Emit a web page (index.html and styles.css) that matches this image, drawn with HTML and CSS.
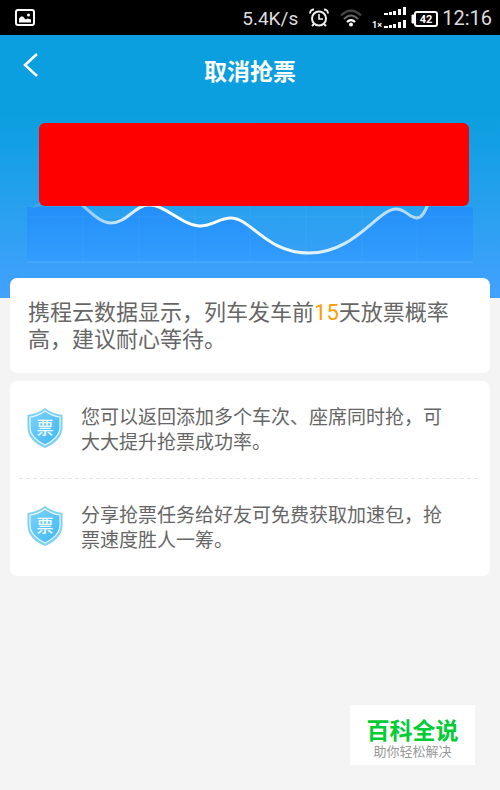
FILE: index.html
```html
<!DOCTYPE html>
<html lang="zh-CN">
<head>
<meta charset="utf-8">
<meta name="viewport" content="width=device-width, initial-scale=1">
<title>取消抢票</title>
<link rel="stylesheet" href="styles.css">
</head>
<body>
<div class="status">
  <svg class="status-photo" width="20" height="18" viewBox="0 0 20 18" aria-hidden="true">
    <rect x="1" y="1" width="18" height="15" rx="2" fill="none" stroke="#fff" stroke-width="2"/>
    <path d="M4 13.500V9.500l2-2h2l2.500 3 2-1 3.500 1v3z" fill="#fff"/>
    <circle cx="13.500" cy="6" r="1.500" fill="#fff"/>
  </svg>
  <span class="speed">5.4K/s</span>
  <svg width="20" height="20" viewBox="0 0 20 20" fill="none" stroke="#eee" aria-hidden="true">
    <circle cx="10" cy="10.500" r="7" stroke-width="2"/>
    <path d="M10 6v5h4" stroke-width="1.600"/>
    <path d="M1 5.500C1 3 3 1.500 5 1.500M19 5.500C19 3 17 1.500 15 1.500M5 16l-2 2M15 16l2 2" stroke-width="2"/>
  </svg>
  <svg class="wifi" width="22" height="18" viewBox="0 0 22 18" fill="none" stroke-width="2.200" aria-hidden="true">
    <path d="M1 6.500Q11-3 21 6.500" stroke="#444"/>
    <path d="M4 10Q11 3 18 10" stroke="#666"/>
    <path d="M7 13Q11 9 15 13" stroke="#fff"/>
    <circle cx="11" cy="15.500" r="2" fill="#fff"/>
  </svg>
  <svg class="signal" width="36" height="24" viewBox="0 0 36 24" fill="#fff" aria-hidden="true">
    <path d="M12 7h4v2h-4zM17 6h3v3h-3zM21 5h3v4h-3zM26 3h3v6h-3zM31 1h3v8h-3zM12 20h4v2h-4zM17 19h3v3h-3zM21 18h3v4h-3zM26 16h3v6h-3zM31 14h3v8h-3z"/>
    <text x="0" y="22" class="signal-label">1×</text>
  </svg>
  <svg class="battery" width="27" height="16" viewBox="0 0 27 16" aria-hidden="true">
    <rect x="4" y="1" width="22" height="14" rx="2" fill="none" stroke="#fff" stroke-width="2"/>
    <path d="M3 4H1v8h2z" fill="#fff" stroke="#fff"/>
    <text x="15" y="12" text-anchor="middle" class="battery-label">42</text>
  </svg>
  <time class="clock">12:16</time>
</div>

<header class="hero">
  <div class="nav">
    <button class="back" type="button" aria-label="返回">
      <svg width="16" height="26" viewBox="0 0 16 26" aria-hidden="true"><path d="M15 2L3 13l12 11" fill="none" stroke="#fff" stroke-width="2.500"/></svg>
    </button>
    <h1>取消抢票</h1>
  </div>
  <div class="chart">
    <svg class="chart-drawing" viewBox="0 0 446 140" preserveAspectRatio="none" aria-hidden="true">
      <defs>
        <linearGradient id="area" x1="0" y1="83" x2="0" y2="138" gradientUnits="userSpaceOnUse">
          <stop offset="0" stop-color="#238ff8"/><stop offset="1" stop-color="#339dfd"/>
        </linearGradient>
        <linearGradient id="line" x1="0" y1="0" x2="446" y2="0" gradientUnits="userSpaceOnUse">
          <stop offset="0" stop-color="#fff" stop-opacity="0"/><stop offset=".22" stop-color="#fff" stop-opacity=".8"/>
          <stop offset=".35" stop-color="#fff"/><stop offset=".6" stop-color="#fff" stop-opacity=".9"/>
          <stop offset=".9" stop-color="#fff" stop-opacity=".6"/>
        </linearGradient>
      </defs>
      <path d="M0 84H56C67 92 74 100 84 100C100 100 108 82 122 82C139 82 156 103 173 103C186 103 192 95 204 95C224 95 239 130 282 130C328 130 351 86 369 86C379 86 382 95 390 95C395 95 398 88 400 84H446V138H0z" fill="url(#area)"/>
      <path d="M56 83V138M112 83V138M168 83V138M223 83V138M279 83V138M335 83V138M390 83V138M0 94H446" fill="none" stroke="#70bfff" stroke-opacity=".2" stroke-dasharray="2 1"/>
      <path d="M0 139H446" stroke="#5aafff" stroke-width="2" stroke-opacity=".4"/>
      <path d="M0 85C7 85 14 82 22 74M50 78C62 87 72 100 84 100C100 100 108 82 122 82C139 82 156 103 173 103C186 103 192 95 204 95C224 95 239 130 282 130C328 130 351 86 369 86C379 86 382 95 390 95C395 95 398 89 401 81" fill="none" stroke="url(#line)" stroke-width="3"/>
    </svg>
    <div class="cover"></div>
  </div>
</header>

<main>
  <section class="card notice">
    <p>携程云数据显示，列车发车前<strong>15</strong>天放票概率高，建议耐心等待。</p>
  </section>
  <ul class="card tips">
    <li>
      <svg class="shield" width="36" height="40" viewBox="0 0 36 40" aria-hidden="true">
        <defs><linearGradient id="blue" x1="0" y1="0" x2="1" y2="1"><stop offset="0" stop-color="#7dd2fa"/><stop offset="1" stop-color="#3db8f1"/></linearGradient></defs>
        <path d="M18 0C23 4 29 6 35.500 7V19C35.500 29 28 36 18 40C8 36 .5 29 .5 19V7C7 6 13 4 18 0z" fill="#7fd0f5"/>
        <path d="M18 3C23 6.500 28 8.500 33 9V19C33 27 26 33.500 18 37C10 33.500 3 27 3 19V9C8 8.500 13 6.500 18 3z" fill="url(#blue)" stroke="#e8f8ff" stroke-width="1.200"/>
        <text x="18" y="26" text-anchor="middle" class="shield-label">票</text>
      </svg>
      <p>您可以返回添加多个车次、座席同时抢，可大大提升抢票成功率。</p>
    </li>
    <li>
      <svg class="shield" width="36" height="40" viewBox="0 0 36 40" aria-hidden="true">
        <path d="M18 0C23 4 29 6 35.500 7V19C35.500 29 28 36 18 40C8 36 .5 29 .5 19V7C7 6 13 4 18 0z" fill="#7fd0f5"/>
        <path d="M18 3C23 6.500 28 8.500 33 9V19C33 27 26 33.500 18 37C10 33.500 3 27 3 19V9C8 8.500 13 6.500 18 3z" fill="url(#blue)" stroke="#e8f8ff" stroke-width="1.200"/>
        <text x="18" y="26" text-anchor="middle" class="shield-label">票</text>
      </svg>
      <p>分享抢票任务给好友可免费获取加速包，抢票速度胜人一筹。</p>
    </li>
  </ul>
</main>

<footer class="brand">
  <strong>百科全说</strong>
  <span>助你轻松解决</span>
</footer>
</body>
</html>
```
FILE: styles.css
```css
* { box-sizing: border-box; }

body {
  margin: 0;
  min-height: 100vh;
  display: flex;
  flex-direction: column;
  background: #f4f4f4;
  color: #666;
  font-family: "Noto Sans CJK SC", sans-serif;
}

h1, p, ul { margin: 0; padding: 0; }

.status {
  display: flex;
  align-items: center;
  height: 35px;
  padding: 0 8px 0 15px;
  background: #000;
  color: #ddd;
  font: 20px/35px Roboto, sans-serif;
}

.speed { margin: 2px 11px 0 auto; font-size: 19px; }
.wifi { margin-left: 11px; }
.signal { margin-left: 10px; }
.battery { margin: 2px 4px 0 3px; }
.clock { margin-top: 2px; }
.signal-label { font: bold 9px Roboto, sans-serif; }
.battery-label { font: bold 11px Roboto, sans-serif; fill: #fff; }

.hero {
  padding-bottom: 35px;
  background: linear-gradient(#0b9fdf 30%, #43a1fe);
}

.nav {
  display: grid;
  grid-template-columns: 60px 1fr 60px;
  align-items: center;
  height: 70px;
  margin-bottom: 18px;
}

.back {
  height: 50px;
  margin-bottom: 10px;
  padding: 0;
  border: 0;
  background: none;
}

.back svg { display: block; margin: auto; }

h1 {
  color: #fff;
  font-size: 23px;
  line-height: 34px;
  text-align: center;
}

.chart {
  display: grid;
  margin: 0 27px;
}

.chart-drawing, .cover { grid-area: 1 / 1; }
.chart-drawing { width: 100%; height: 140px; }

.cover {
  height: 83px;
  margin: 0 4px 0 12px;
  border-radius: 6px;
  background: #f00;
}

main {
  display: grid;
  gap: 8px;
  margin: -20px 10px 0;
}

.card {
  border-radius: 7px;
  background: #fff;
}

.notice {
  padding: 19px 18px 22px;
  font-size: 22px;
  line-height: 27px;
}

.notice strong {
  color: #ff9c00;
  font-family: Roboto, sans-serif;
  font-weight: 400;
  line-height: 1;
}

.tips {
  padding: 0 9px;
  list-style: none;
  font-size: 19px;
  line-height: 25px;
}

.tips li {
  display: flex;
  align-items: center;
  gap: 18px;
  padding: 22px 22px 25px 8px;
}

.tips li + li {
  padding-top: 23px;
  background: repeating-linear-gradient(90deg, #e4e4e4 0 4px, #fff 4px 7px) top / 100% 1px no-repeat;
}

.tips p { flex: 1; }
.shield { flex: none; }
.shield-label { font: 500 17px "Noto Sans CJK SC", sans-serif; fill: #effaff; }

.brand {
  display: flex;
  flex-direction: column;
  align-items: center;
  align-self: flex-end;
  width: 125px;
  height: 60px;
  margin: auto 25px 25px 0;
  padding-top: 9px;
  background: #fff;
}

.brand strong {
  color: #0c3;
  font-size: 23px;
  line-height: 30px;
}

.brand span {
  color: #999;
  font-size: 13px;
  line-height: 14px;
}
```
